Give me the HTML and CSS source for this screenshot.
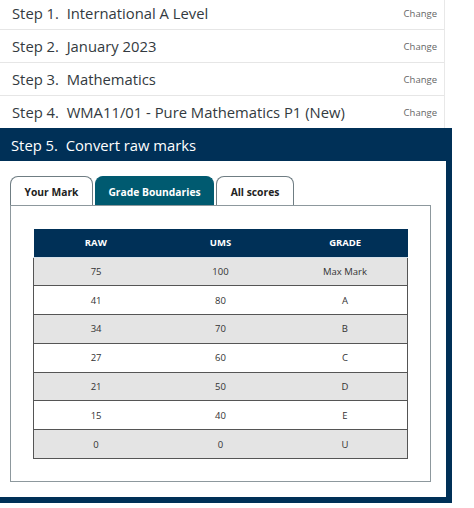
FILE: index.html
```html
<!DOCTYPE html>
<html lang="en">
<head>
<meta charset="utf-8">
<title>Convert raw marks</title>
<link rel="stylesheet" href="styles.css">
</head>
<body>
<div class="steps">
  <div class="step"><span class="step-label">Step 1.&nbsp; International A Level</span><a class="change" href="#">Change</a></div>
  <div class="step"><span class="step-label">Step 2.&nbsp; January 2023</span><a class="change" href="#">Change</a></div>
  <div class="step"><span class="step-label">Step 3.&nbsp; Mathematics</span><a class="change" href="#">Change</a></div>
  <div class="step step-last"><span class="step-label">Step 4.&nbsp; WMA11/01 - Pure Mathematics P1 (New)</span><a class="change" href="#">Change</a></div>
</div>
<section class="convert">
  <h2 class="convert-title">Step 5.&nbsp; Convert raw marks</h2>
  <div class="convert-body">
    <div class="tabs">
      <div class="tab tab-mark">Your Mark</div>
      <div class="tab tab-bounds tab-active">Grade Boundaries</div>
      <div class="tab tab-all">All scores</div>
    </div>
    <div class="panel">
      <table class="grades">
        <thead>
          <tr><th>RAW</th><th>UMS</th><th>GRADE</th></tr>
        </thead>
        <tbody>
          <tr class="shade"><td>75</td><td>100</td><td>Max Mark</td></tr>
          <tr><td>41</td><td>80</td><td>A</td></tr>
          <tr class="shade"><td>34</td><td>70</td><td>B</td></tr>
          <tr><td>27</td><td>60</td><td>C</td></tr>
          <tr class="shade"><td>21</td><td>50</td><td>D</td></tr>
          <tr><td>15</td><td>40</td><td>E</td></tr>
          <tr class="shade"><td>0</td><td>0</td><td>U</td></tr>
        </tbody>
      </table>
    </div>
  </div>
</section>
</body>
</html>
```

FILE: styles.css
```css
* { box-sizing: border-box; }
html, body {
  margin: 0;
  padding: 0;
  background: #ffffff;
  font-family: "Open Sans", "Noto Sans", sans-serif;
  overflow: hidden;
}
.steps {
  width: 445px;
  margin-top: -3px;
  border-right: 1px solid #e8e8e8;
}
.step {
  height: 33px;
  display: flex;
  align-items: center;
  justify-content: space-between;
  padding: 0 7px 0 12px;
  border-bottom: 1px solid #e6e6e6;
}
.step-last { border-bottom: none; height: 32px; }
.step-label {
  font-size: 14.8px;
  color: #333a40;
  white-space: nowrap;
}
.change {
  font-size: 9.5px;
  color: #666;
  text-decoration: none;
}
.convert {
  width: 452px;
  background: #003057;
  padding: 0 6px 6px 0;
}
.convert-title {
  margin: 0;
  height: 33px;
  display: flex;
  align-items: center;
  padding-left: 11px;
  font-size: 14.8px;
  font-weight: 400;
  color: #ffffff;
  white-space: nowrap;
}
.convert-body {
  background: #ffffff;
  padding: 15px 15px 15px 10px;
}
.tabs {
  display: flex;
  gap: 2px;
  height: 29px;
}
.tab {
  display: flex;
  align-items: center;
  justify-content: center;
  padding: 1px 0 0;
  border: 1px solid #6f7d83;
  border-bottom: none;
  border-radius: 8px 8px 0 0;
  font-size: 10.3px;
  font-weight: 700;
  color: #222;
  background: #fff;
  white-space: nowrap;
}
.tab-mark { width: 83px; }
.tab-bounds { width: 119px; }
.tab-all { width: 78px; }
.tab-active {
  background: #005a70;
  border-color: #005a70;
  color: #ffffff;
}
.panel {
  border: 1px solid #8d989d;
  padding: 23px 22px 22px;
}
.grades {
  width: 375px;
  border-collapse: collapse;
  table-layout: fixed;
  font-size: 9.5px;
  color: #333;
}
.grades th {
  background: #003057;
  color: #fff;
  font-weight: 700;
  height: 28px;
  padding: 0;
  text-align: center;
  border-bottom: 1px solid #d6e1ea;
}
.grades td {
  height: 28.8px;
  padding: 0;
  text-align: center;
  border-bottom: 1px solid #555;
}
.grades tbody tr {
  border-left: 1px solid #555;
  border-right: 1px solid #555;
}
.grades tr.shade td { background: #e4e4e4; }
```
